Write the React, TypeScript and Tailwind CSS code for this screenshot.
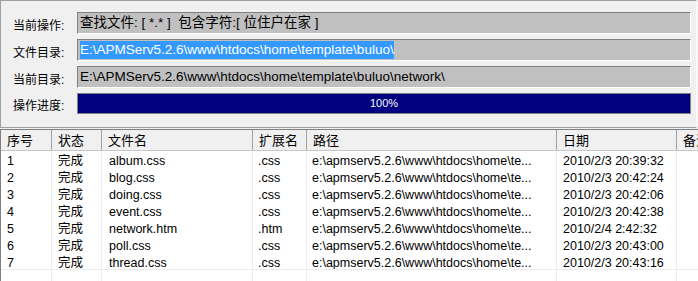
import React from "react";

interface FileRow {
  no: number;
  status: string;
  name: string;
  ext: string;
  path: string;
  date: string;
}

const rows: FileRow[] = [
  { no: 1, status: "完成", name: "album.css", ext: ".css", path: "e:\\apmserv5.2.6\\www\\htdocs\\home\\te...", date: "2010/2/3 20:39:32" },
  { no: 2, status: "完成", name: "blog.css", ext: ".css", path: "e:\\apmserv5.2.6\\www\\htdocs\\home\\te...", date: "2010/2/3 20:42:24" },
  { no: 3, status: "完成", name: "doing.css", ext: ".css", path: "e:\\apmserv5.2.6\\www\\htdocs\\home\\te...", date: "2010/2/3 20:42:06" },
  { no: 4, status: "完成", name: "event.css", ext: ".css", path: "e:\\apmserv5.2.6\\www\\htdocs\\home\\te...", date: "2010/2/3 20:42:38" },
  { no: 5, status: "完成", name: "network.htm", ext: ".htm", path: "e:\\apmserv5.2.6\\www\\htdocs\\home\\te...", date: "2010/2/4 2:42:32" },
  { no: 6, status: "完成", name: "poll.css", ext: ".css", path: "e:\\apmserv5.2.6\\www\\htdocs\\home\\te...", date: "2010/2/3 20:43:00" },
  { no: 7, status: "完成", name: "thread.css", ext: ".css", path: "e:\\apmserv5.2.6\\www\\htdocs\\home\\te...", date: "2010/2/3 20:43:16" },
];

// column widths: 序号 状态 文件名 扩展名 路径 日期 备注
const cols = ["w-[51px]", "w-[50px]", "w-[151px]", "w-[54px]", "w-[250px]", "w-[120px]", "w-[40px]"];
const headers = ["序号", "状态", "文件名", "扩展名", "路径", "日期", "备注"];

const Field: React.FC<{ children: React.ReactNode }> = ({ children }) => (
  <div className="flex h-[22px] flex-1 items-center border border-t-[#808080] border-l-[#808080] border-b-white border-r-white bg-[#c0c0c0] pl-[2px] whitespace-nowrap overflow-hidden">
    {children}
  </div>
);

const App: React.FC = () => {
  return (
    <div className="h-[281px] w-[698px] overflow-hidden bg-[#f0f0f0] text-[12px] leading-none text-black [font-family:'Liberation_Sans','Noto_Sans_CJK_SC',sans-serif]">
      {/* Status panel */}
      <div className="flex h-[128px] w-[697px] flex-col gap-[5px] border border-t-[#a0a0a0] border-l-[#a0a0a0] border-b-[#a0a0a0] border-r-white pt-[11px] pl-[12px] pr-[5px]">
        <div className="flex items-center">
          <span className="w-[64px] pt-[6px]">当前操作:</span>
          <Field>
            <span className="text-[13.5px]">查找文件: [ *.* ]&nbsp; 包含字符:[ 位住户在家 ]</span>
          </Field>
        </div>
        <div className="flex items-center">
          <span className="w-[64px] pt-[6px]">文件目录:</span>
          <Field>
            <span className="bg-[#3399ff] py-[2px] text-[13.5px] text-white">E:\APMServ5.2.6\www\htdocs\home\template\buluo\</span>
          </Field>
        </div>
        <div className="flex items-center">
          <span className="w-[64px] pt-[6px]">当前目录:</span>
          <Field>
            <span className="text-[13.5px]">E:\APMServ5.2.6\www\htdocs\home\template\buluo\network\</span>
          </Field>
        </div>
        <div className="flex items-center">
          <span className="w-[64px] pt-[4px]">操作进度:</span>
          <div className="flex h-[21px] flex-1 items-center justify-center border border-[#808080] bg-[#000080] text-[11px] text-white">
            100%
          </div>
        </div>
      </div>

      {/* File list */}
      <div className="mt-[1px] h-[152px] border-l border-t border-[#808080] bg-white">
        <div className="flex h-[21px] border-b border-[#c8c8c8] bg-[#f0f0f0]">
          {headers.map((h, i) => (
            <div
              key={h}
              className={`${cols[i]} flex shrink-0 items-center border-r border-r-[#a0a0a0] pl-[6px] text-[13px] whitespace-nowrap overflow-hidden`}
            >
              {h}
            </div>
          ))}
        </div>
        <div>
          {rows.map((r, idx) => (
            <div
              key={r.no}
              className={`flex h-[17px] text-[12.5px] ${idx === rows.length - 1 ? "border-b border-[#ececec]" : ""}`}
            >
              <div className={`${cols[0]} shrink-0 border-r border-[#ececec] pl-[6px] pt-[4px]`}>{r.no}</div>
              <div className={`${cols[1]} shrink-0 border-r border-[#ececec] pl-[6px] pt-[4px]`}>{r.status}</div>
              <div className={`${cols[2]} shrink-0 border-r border-[#ececec] pl-[7px] pt-[4px]`}>{r.name}</div>
              <div className={`${cols[3]} shrink-0 border-r border-[#ececec] pl-[5px] pt-[4px]`}>{r.ext}</div>
              <div className={`${cols[4]} shrink-0 border-r border-[#ececec] pl-[5px] pt-[4px] whitespace-nowrap overflow-hidden`}>{r.path}</div>
              <div className={`${cols[5]} shrink-0 border-r border-[#ececec] pl-[6px] pt-[4px]`}>{r.date}</div>
              <div className={`${cols[6]} shrink-0`}></div>
            </div>
          ))}
          <div className="flex h-[15px]">
            {cols.slice(0, 6).map((c) => (
              <div key={c} className={`${c} shrink-0 border-r border-[#ececec]`}></div>
            ))}
          </div>
        </div>
      </div>
    </div>
  );
};

export default App;
